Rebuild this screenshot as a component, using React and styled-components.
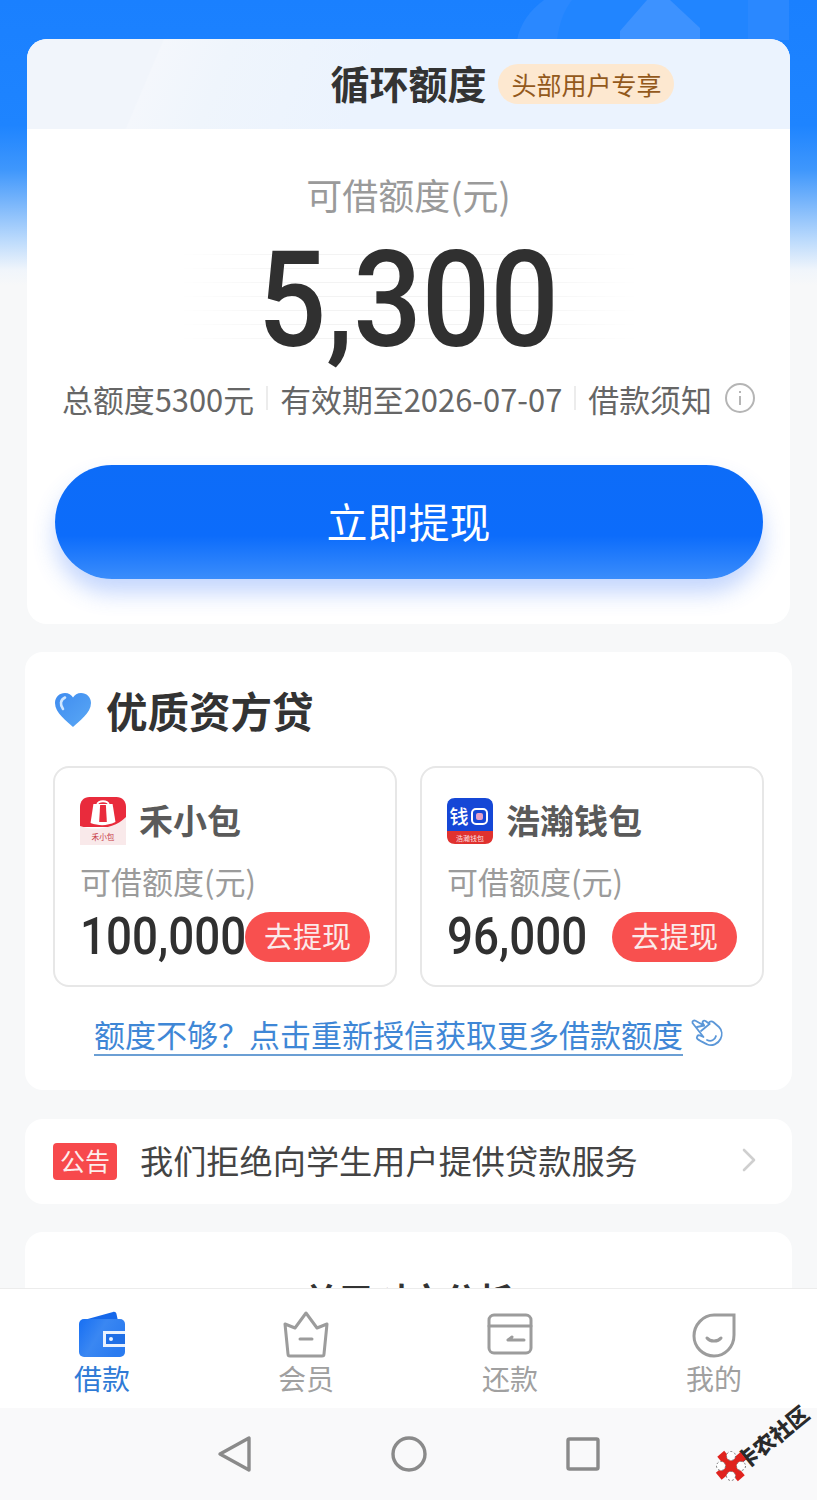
import React from "react";
import styled, { createGlobalStyle } from "styled-components";

const GlobalStyle = createGlobalStyle`
  html, body {
    margin: 0;
    padding: 0;
    background: #f7f8f9;
  }
  * {
    box-sizing: border-box;
  }
`;

const CJK = `"Noto Sans CJK SC", "Noto Sans", sans-serif`;

const Page = styled.div`
  position: relative;
  width: 817px;
  height: 1500px;
  display: flex;
  flex-direction: column;
  overflow: hidden;
  font-family: ${CJK};
  background: linear-gradient(180deg, #1a80ff 0, #1e84ff 125px, #3f97fc 170px, #74b3fb 200px, #bbdafc 240px, #f0f5fb 270px, #f7f8f9 285px) no-repeat;
  background-size: 100% 300px;
  background-color: #f7f8f9;
`;

const Decoration = styled.svg`
  position: absolute;
  top: 0;
  left: 480px;
`;

const Feed = styled.main`
  position: relative;
  flex: 1;
  min-height: 0;
  overflow: hidden;
  padding-top: 39px;
  display: flex;
  flex-direction: column;
  align-items: center;
`;

const QuotaCard = styled.section`
  width: 763px;
  height: 585px;
  flex: none;
  border-radius: 20px;
  background: #fff;
  overflow: hidden;
`;

const QuotaHeader = styled.header`
  height: 90px;
  padding-bottom: 4px;
  display: flex;
  justify-content: center;
  align-items: center;
  background: linear-gradient(113deg, #f1f5fb 0, #f1f5fb 17%, #f4f7fc 17.2%, #eff5fc 26%, #ebf3fe 45%, #ebf3fe 100%);
`;

const QuotaTitle = styled.h1`
  position: relative;
  margin: 0;
  font-size: 39px;
  line-height: 50px;
  font-weight: 700;
  color: #333;
`;

const Perk = styled.span`
  position: absolute;
  left: 168px;
  top: 7px;
  height: 40px;
  width: 176px;
  display: flex;
  align-items: center;
  justify-content: center;
  border-radius: 20px;
  background: #fde8d0;
  color: #93591c;
  font-size: 25px;
  font-weight: 400;
  white-space: nowrap;
`;

const QuotaBody = styled.div`
  display: flex;
  flex-direction: column;
  align-items: center;
  padding-top: 39px;
`;

const QuotaLabel = styled.div`
  font-size: 36px;
  line-height: 52px;
  color: #9a9a9a;
`;

const Figure = styled.div`
  font-family: Roboto, "Liberation Sans", sans-serif;
  font-weight: ${(p) => p.$weight};
  font-size: ${(p) => p.$size}px;
  line-height: ${(p) => p.$line}px;
  color: #303030;
  transform: scaleX(${(p) => p.$squeeze});
  transform-origin: ${(p) => p.$origin};
  white-space: nowrap;
`;

const LenderAmount = styled(Figure)`
  flex: 1;
  min-width: 0;
`;

const FigureBand = styled.div`
  position: relative;
  width: 460px;
  height: 110px;
  margin-top: 26px;
  display: flex;
  justify-content: center;
  align-items: center;

  &::before {
    content: "";
    position: absolute;
    inset: 8px 0;
    background: repeating-linear-gradient(180deg, #f3f3f3 0, #f3f3f3 1px, #fff 1px, #fff 14px);
    mask-image: linear-gradient(90deg, transparent, #000 25%, #000 75%, transparent);
  }
`;

const FigureLayer = styled.div`
  position: relative;
`;

const InfoRow = styled.div`
  align-self: flex-start;
  margin: 19px 0 0 35px;
  height: 46px;
  display: flex;
  align-items: center;
  font-size: 30.9px;
  color: #666;
  white-space: nowrap;
`;

const InfoDivider = styled.i`
  width: 2px;
  height: 24px;
  margin: 0 12px;
  background: #ececec;
`;

const InfoMark = styled.svg`
  margin-left: 13px;
`;

const PrimaryButton = styled.button`
  display: block;
  width: 708px;
  height: 114px;
  margin-top: 44px;
  padding: 0 0 5px;
  border: 0;
  border-radius: 57px;
  color: #fff;
  font-family: ${CJK};
  font-size: 41px;
  background: linear-gradient(180deg, #0d6cf8 0%, #0c6cfb 62%, #3b8dfb 100%);
  box-shadow: 0 14px 22px rgba(60, 120, 250, 0.3);
`;

const Panel = styled.section`
  width: 767px;
  flex: none;
  margin-top: ${(p) => p.$top}px;
  border-radius: 18px;
  background: #fff;
`;

const LenderPanel = styled(Panel)`
  height: 438px;
  padding: 33px 28px 0;
`;

const PanelHead = styled.div`
  display: flex;
  align-items: center;
  gap: 14px;
  height: 50px;
  padding-left: 1px;
`;

const PanelTitle = styled.h2`
  margin: 0;
  font-size: 41.5px;
  line-height: 50px;
  font-weight: 700;
  color: #333;
`;

const LenderGrid = styled.div`
  display: grid;
  grid-template-columns: 344px 344px;
  column-gap: 23px;
  margin-top: 31px;
`;

const LenderTile = styled.article`
  height: 221px;
  padding: 29px 25px 0 25px;
  border: 2px solid #e7e7e7;
  border-radius: 16px;
`;

const LenderHead = styled.div`
  display: flex;
  align-items: center;
  gap: 13px;
  height: 48px;
`;

const LenderName = styled.div`
  padding-bottom: 4px;
  font-size: 34px;
  font-weight: 700;
  color: #5a5a5a;
`;

const LenderLabel = styled.div`
  margin-top: 14px;
  font-size: 31px;
  line-height: 44px;
  color: #9b9b9b;
`;

const LenderFoot = styled.div`
  display: flex;
  align-items: center;
  height: 50px;
  margin-top: 9px;
`;

const WithdrawButton = styled.button`
  width: 125px;
  height: 50px;
  flex: none;
  padding: 0 0 4px;
  border: 0;
  border-radius: 25px;
  background: #f8504f;
  color: #fbeaea;
  font-family: ${CJK};
  font-size: 29px;
`;

const RefreshRow = styled.div`
  display: flex;
  justify-content: center;
  align-items: flex-start;
  gap: 8px;
  margin-top: 27px;
`;

const RefreshLink = styled.a`
  font-size: 31px;
  line-height: 40px;
  height: 40px;
  color: #3f87d6;
  border-bottom: 2px solid #6b9fd4;
  box-sizing: content-box;
  white-space: nowrap;
`;

const HandMark = styled.svg`
  margin-top: 5px;
`;

const NoticePanel = styled(Panel)`
  height: 85px;
  display: flex;
  align-items: center;
  padding: 0 36px 0 28px;
`;

const NoticeTag = styled.span`
  width: 64px;
  height: 37px;
  flex: none;
  display: flex;
  align-items: center;
  justify-content: center;
  padding-bottom: 3px;
  border-radius: 4px;
  background: #f7494c;
  color: #fdeeee;
  font-size: 25px;
`;

const NoticeText = styled.span`
  flex: 1;
  margin-left: 23px;
  padding-bottom: 4px;
  font-size: 33.2px;
  color: #444;
  white-space: nowrap;
`;

const NoticeArrow = styled.svg`
  margin-bottom: 4px;
`;

const TeaserPanel = styled(Panel)`
  height: 120px;
  padding-top: 42px;
  text-align: center;
`;

const TeaserTitle = styled.h2`
  margin: 0;
  font-size: 35px;
  line-height: 50px;
  font-weight: 700;
  color: #333;
`;

const TabBar = styled.nav`
  position: relative;
  flex: none;
  height: 120px;
  display: grid;
  grid-template-columns: repeat(4, 204px);
  padding-top: 22px;
  background: #fff;
  border-top: 1px solid #ececec;
`;

const Tab = styled.div`
  display: flex;
  flex-direction: column;
  align-items: center;
`;

const TabIcon = styled.svg`
  display: block;
`;

const TabLabel = styled.span`
  margin-top: -1px;
  font-size: 28px;
  line-height: 40px;
  color: ${(p) => (p.$active ? "#2f7bd6" : "#a0a0a0")};
`;

const SystemBar = styled.div`
  flex: none;
  height: 92px;
  display: flex;
  justify-content: center;
  align-items: center;
  gap: 138px;
  background: #f9f9fa;
`;

const Watermark = styled.div`
  position: absolute;
  left: 712px;
  top: 1404px;
  width: 105px;
  height: 82px;
`;

const WatermarkText = styled.span`
  position: absolute;
  left: 17px;
  top: 19px;
  font-family: "Noto Sans CJK SC", sans-serif;
  font-size: 21.5px;
  line-height: 28px;
  font-weight: 900;
  color: #2a2a2a;
  white-space: nowrap;
  transform: rotate(-39deg);
`;

const Flower = styled.svg`
  position: absolute;
  left: 3px;
  top: 46px;
`;

const HeartIcon = () => (
  <svg width="38" height="36" viewBox="0 0 38 36">
    <defs>
      <linearGradient id="heart" x1="0" y1="0" x2="1" y2="1">
        <stop offset="0" stopColor="#3f8cf0" />
        <stop offset="1" stopColor="#5aa8f5" />
      </linearGradient>
    </defs>
    <path
      d="M19 35C13 29 1 21 1 11C1 5 5.5 1 11 1C14.5 1 17.5 3 19 5.5C20.5 3 23.5 1 27 1C32.5 1 37 5 37 11C37 21 25 29 19 35Z"
      fill="url(#heart)"
    />
    <path d="M9 17C6 13 6 8 11 5.5" fill="none" stroke="#cfe6ff" strokeWidth="2.6" strokeLinecap="round" />
  </svg>
);

const BagLogo = () => (
  <svg width="46" height="48" viewBox="0 0 48 48" preserveAspectRatio="none">
    <path d="M10 0H38C44 0 48 4 48 10V30H0V10C0 4 4 0 10 0Z" fill="#e92b3c" />
    <path d="M0 29C14 34 36 32 48 20V48H0Z" fill="#f9e9ea" />
    <path d="M14 7H34L37 25C28 29 20 29 11 26Z" fill="#fff" />
    <path d="M21 8H27L28 25H20Z" fill="#e92b3c" />
    <path d="M18 8C18 3 30 3 30 8" fill="none" stroke="#fff" strokeWidth="2" />
    <text x="24" y="43" textAnchor="middle" fontSize="8" fill="#c73b45" fontFamily="Noto Sans CJK SC">禾小包</text>
  </svg>
);

const WalletLogo = () => (
  <svg width="46" height="46" viewBox="0 0 46 46">
    <path d="M8 0H38C43 0 46 3 46 8V34H0V8C0 3 3 0 8 0Z" fill="#1547d6" />
    <path d="M0 33H46V38C46 43 43 46 38 46H8C3 46 0 43 0 38Z" fill="#e0322f" />
    <text x="12" y="26" textAnchor="middle" fontSize="19" fontWeight="500" fill="#fff" fontFamily="Noto Sans CJK SC">钱</text>
    <rect x="25" y="11" width="15" height="15" rx="4" fill="none" stroke="#fff" strokeWidth="2" />
    <rect x="29" y="15" width="7" height="7" rx="2" fill="#e5a0c8" />
    <text x="23" y="43" textAnchor="middle" fontSize="7" fill="#fbdede" fontFamily="Noto Sans CJK SC">浩瀚钱包</text>
  </svg>
);

const HandIcon = () => (
  <HandMark width="32" height="28" viewBox="0 0 32 28" fill="none" stroke="#5b97d8" strokeWidth="1.8" strokeLinecap="round" strokeLinejoin="round">
    <path d="M1.5 4C1 2 3 1 4.500 1.800L13 6.500L11.500 3.500C11.500 2 13 1.200 14.500 2L18.500 5L18 3.500C19 2 21 2 22.500 3.200L28 8C31 11 31.500 16 29.500 20C27 25 21 27.500 16.500 25.500C13.500 24 9 22 6.500 20C5 18.500 6.500 15.500 9 16.500L12.500 18L1.500 4Z" />
    <path d="M6 8L13 6.500M10 12L18.500 5" />
    <path d="M16 21C20 23 24 21 25 17" />
  </HandMark>
);

const Chevron = () => (
  <NoticeArrow width="14" height="24" viewBox="0 0 14 24" fill="none" stroke="#cfcfcf" strokeWidth="2.6" strokeLinecap="round" strokeLinejoin="round">
    <path d="M2 2L12 12L2 22" />
  </NoticeArrow>
);

const WalletTab = () => (
  <TabIcon width="48" height="48" viewBox="0 0 48 48">
    <defs>
      <linearGradient id="wallet" x1="0" y1="0" x2="1" y2="0.5">
        <stop offset="0" stopColor="#176ff3" />
        <stop offset="0.5" stopColor="#3a87f2" />
        <stop offset="1" stopColor="#2a7bf0" />
      </linearGradient>
    </defs>
    <path d="M6 9L35 1C37 0.5 38 1.5 38.5 3L40 10Z" fill="#1668ea" />
    <rect x="1" y="8" width="46" height="38" rx="5" fill="url(#wallet)" />
    <path d="M47 20H25V36H47" fill="#eaf2fe" />
    <rect x="28" y="23" width="19" height="10" fill="#1f6fe6" />
    <circle cx="33" cy="28" r="2" fill="#eaf2fe" />
  </TabIcon>
);

const CrownTab = () => (
  <TabIcon width="48" height="48" viewBox="0 0 48 48" fill="none" stroke="#9c9c9c" strokeWidth="3" strokeLinejoin="round" strokeLinecap="round">
    <path d="M3 13L13 17L24 2L35 17L45 13L42 43C42 44.500 41 45 40 45H8C7 45 6 44.500 6 43Z" />
    <path d="M18 28H30" />
  </TabIcon>
);

const CardTab = () => (
  <TabIcon width="46" height="48" viewBox="0 0 46 48" fill="none" stroke="#9c9c9c" strokeWidth="3" strokeLinejoin="round" strokeLinecap="round">
    <rect x="2" y="4" width="42" height="38" rx="5" />
    <path d="M2 15H44" />
    <path d="M37 29H21M21 29L25 26" />
  </TabIcon>
);

const DropTab = () => (
  <TabIcon width="46" height="48" viewBox="0 0 46 48" fill="none" stroke="#9c9c9c" strokeWidth="3" strokeLinecap="round">
    <path d="M43 4V24C43 36 34 45 23 45C12 45 3 36 3 25C3 14 12 4 23 4Z" />
    <path d="M16 27C19 31 27 31 30 27" />
  </TabIcon>
);

const tabs = [
  { label: "借款", icon: <WalletTab />, active: true },
  { label: "会员", icon: <CrownTab /> },
  { label: "还款", icon: <CardTab /> },
  { label: "我的", icon: <DropTab /> },
];

const lenders = [
  { name: "禾小包", amount: "100,000", logo: <BagLogo /> },
  { name: "浩瀚钱包", amount: "96,000", logo: <WalletLogo /> },
];

export default function App() {
  return (
    <Page>
      <GlobalStyle />
      <Decoration width="337" height="40" viewBox="0 0 337 40">
        <path d="M37 40C40 24 50 10 64 0H309V40Z" fill="#2a88ff" />
        <path d="M77 40C79 24 84 10 92 0H268V40Z" fill="#2185ff" />
        <path d="M140 40V31L167 0H190L220 28V40Z" fill="#3d92ff" />
      </Decoration>
      <Feed>
        <QuotaCard>
          <QuotaHeader>
            <QuotaTitle>
              循环额度
              <Perk>头部用户专享</Perk>
            </QuotaTitle>
          </QuotaHeader>
          <QuotaBody>
            <QuotaLabel>可借额度(元)</QuotaLabel>
            <FigureBand>
              <FigureLayer>
                <Figure $size={134} $line={110} $weight={500} $squeeze={0.9} $origin="center">
                  5,300
                </Figure>
              </FigureLayer>
            </FigureBand>
            <InfoRow>
              总额度5300元
              <InfoDivider />
              有效期至2026-07-07
              <InfoDivider />
              借款须知
              <InfoMark width="30" height="30" viewBox="0 0 30 30" fill="none" stroke="#b5b5b5" strokeWidth="2">
                <circle cx="15" cy="15" r="14" />
                <path d="M15 13V22M15 8V10" />
              </InfoMark>
            </InfoRow>
            <PrimaryButton>立即提现</PrimaryButton>
          </QuotaBody>
        </QuotaCard>

        <LenderPanel $top={28}>
          <PanelHead>
            <HeartIcon />
            <PanelTitle>优质资方贷</PanelTitle>
          </PanelHead>
          <LenderGrid>
            {lenders.map((l) => (
              <LenderTile key={l.name}>
                <LenderHead>
                  {l.logo}
                  <LenderName>{l.name}</LenderName>
                </LenderHead>
                <LenderLabel>可借额度(元)</LenderLabel>
                <LenderFoot>
                  <LenderAmount $size={52} $line={50} $weight={500} $squeeze={0.88} $origin="left center">
                    {l.amount}
                  </LenderAmount>
                  <WithdrawButton>去提现</WithdrawButton>
                </LenderFoot>
              </LenderTile>
            ))}
          </LenderGrid>
          <RefreshRow>
            <RefreshLink>额度不够？点击重新授信获取更多借款额度</RefreshLink>
            <HandIcon />
          </RefreshRow>
        </LenderPanel>

        <NoticePanel $top={29}>
          <NoticeTag>公告</NoticeTag>
          <NoticeText>我们拒绝向学生用户提供贷款服务</NoticeText>
          <Chevron />
        </NoticePanel>

        <TeaserPanel $top={28}>
          <TeaserTitle>关于对方分析</TeaserTitle>
        </TeaserPanel>
      </Feed>

      <TabBar>
        {tabs.map((t) => (
          <Tab key={t.label}>
            {t.icon}
            <TabLabel $active={t.active}>{t.label}</TabLabel>
          </Tab>
        ))}
      </TabBar>

      <SystemBar>
        <svg width="36" height="38" viewBox="0 0 36 38" fill="none" stroke="#8a8a8a" strokeWidth="3.4" strokeLinejoin="round">
          <path d="M32 3V35L3 19Z" />
        </svg>
        <svg width="36" height="36" viewBox="0 0 36 36" fill="none" stroke="#8a8a8a" strokeWidth="3.4">
          <circle cx="18" cy="18" r="16" />
        </svg>
        <svg width="36" height="36" viewBox="0 0 36 36" fill="none" stroke="#8a8a8a" strokeWidth="3.4" strokeLinejoin="round">
          <rect x="3" y="3" width="30" height="30" rx="1.5" />
        </svg>
      </SystemBar>

      <Watermark>
        <WatermarkText>卡农社区</WatermarkText>
        <Flower width="32" height="32" viewBox="0 0 32 32">
          <g transform="rotate(-40 16 16)">
            <rect x="11.500" y="0" width="9" height="32" fill="#e0231e" />
            <rect x="0" y="11.500" width="32" height="9" fill="#e0231e" />
          </g>
          <g fill="#fff" stroke="#777" strokeWidth="1" strokeDasharray="2 2">
            <circle cx="16" cy="6" r="4.500" />
            <circle cx="6" cy="16" r="4.500" />
            <circle cx="26" cy="16" r="4.500" />
            <circle cx="16" cy="26" r="4.500" />
          </g>
        </Flower>
      </Watermark>
    </Page>
  );
}
